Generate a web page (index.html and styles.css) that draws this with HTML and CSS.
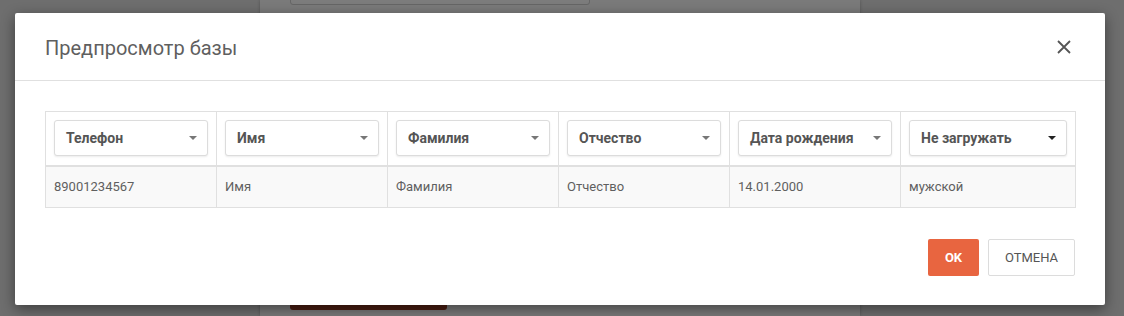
FILE: index.html
```html
<!DOCTYPE html>
<html lang="ru">
<head>
<meta charset="utf-8">
<link rel="stylesheet" href="styles.css">
</head>
<body>
<div class="page">
  <div class="side-left"></div>
  <div class="center">
    <div class="fake-input"></div>
    <div class="fake-btn"></div>
  </div>
  <div class="side-right"></div>
</div>
<div class="modal">
  <div class="modal-head">
    <h2 class="modal-title">Предпросмотр базы</h2>
    <button class="close" aria-label="close">
      <svg width="16" height="16" viewBox="0 0 16 16"><path d="M2 2L14 14M14 2L2 14" stroke="#555" stroke-width="1.8" fill="none"/></svg>
    </button>
  </div>
  <div class="modal-body">
    <table class="grid">
      <thead>
        <tr>
          <th><div class="sel">Телефон<span class="caret"></span></div></th>
          <th><div class="sel">Имя<span class="caret"></span></div></th>
          <th><div class="sel">Фамилия<span class="caret"></span></div></th>
          <th><div class="sel">Отчество<span class="caret"></span></div></th>
          <th><div class="sel">Дата рождения<span class="caret"></span></div></th>
          <th class="last"><div class="sel">Не загружать<span class="caret dark"></span></div></th>
        </tr>
      </thead>
      <tbody>
        <tr>
          <td>89001234567</td>
          <td>Имя</td>
          <td>Фамилия</td>
          <td>Отчество</td>
          <td>14.01.2000</td>
          <td>мужской</td>
        </tr>
      </tbody>
    </table>
  </div>
  <div class="modal-foot">
    <button class="btn btn-ok">OK</button>
    <button class="btn btn-cancel">ОТМЕНА</button>
  </div>
</div>
</body>
</html>
```
FILE: styles.css
```css
* { box-sizing: border-box; }
html, body { margin: 0; padding: 0; height: 100%; }
body {
  font-family: Roboto, "Liberation Sans", sans-serif;
  background: #6f6f6f;
  overflow: hidden;
}
.page {
  display: flex;
  height: 316px;
}
.side-left { width: 260px; background: #6e6e6e; }
.center {
  width: 600px;
  background: #7a7a7a;
  position: relative;
  box-shadow: 0 0 3px rgba(0,0,0,0.25);
}
.side-right { flex: 1; background: #6e6e6e; }
.fake-input {
  position: absolute;
  left: 30px; top: -10px;
  width: 300px; height: 15px;
  border: 1px solid #666;
  border-radius: 3px;
  background: #7c7c7c;
}
.fake-btn {
  position: absolute;
  left: 30px; top: 300px;
  width: 157px; height: 10px;
  background: #4a1d12;
  border-radius: 3px;
}
.modal {
  position: absolute;
  left: 15px; top: 13px;
  width: 1090px; height: 292px;
  background: #fff;
  border-radius: 2px;
  box-shadow: 0 4px 14px rgba(0,0,0,0.45);
}
.modal-head {
  height: 68px;
  border-bottom: 1px solid #e0e0e0;
  display: flex;
  align-items: center;
  justify-content: space-between;
  padding: 0 33px 0 30px;
}
.modal-title {
  margin: 0;
  font-size: 20px;
  font-weight: 400;
  color: #5f5f5f;
  padding-top: 2px;
}
.close {
  border: 0;
  background: none;
  padding: 0;
  width: 16px; height: 16px;
  display: flex;
  cursor: pointer;
}
.modal-body {
  padding: 30px 30px 0 30px;
}
.grid {
  width: 1030px;
  border-collapse: collapse;
  table-layout: fixed;
  font-size: 13px;
  color: #5f5f5f;
}
.grid th, .grid td {
  border: 1px solid #e0e0e0;
  text-align: left;
}
.grid th {
  width: 171px;
  padding: 8px 8px 9px 8px;
  border-bottom: 2px solid #e0e0e0;
}
.grid th.last { width: 175px; }
.grid td {
  background: #f9f9f9;
  height: 41px;
  padding: 0 8px;
}
.sel {
  height: 36px;
  border: 1px solid #dcdcdc;
  border-radius: 3px;
  box-shadow: 0 1px 2px rgba(0,0,0,0.08);
  display: flex;
  align-items: center;
  justify-content: space-between;
  padding: 0 10px 0 11px;
  font-size: 14px;
  font-weight: 700;
  color: #555;
  background: #fff;
}
.caret {
  width: 0; height: 0;
  border-left: 4px solid transparent;
  border-right: 4px solid transparent;
  border-top: 4px solid #777;
}
.caret.dark { border-top-color: #222; }
.modal-foot {
  display: flex;
  justify-content: flex-end;
  gap: 9px;
  padding: 31px 30px 0 0;
}
.btn {
  height: 37px;
  font-family: Roboto, "Liberation Sans", sans-serif;
  font-size: 13px;
  border-radius: 2px;
  cursor: pointer;
}
.btn-ok {
  width: 51px;
  background: #e86540;
  color: #fff;
  border: 0;
  font-weight: 700;
}
.btn-cancel {
  width: 87px;
  background: #fff;
  border: 1px solid #dcdcdc;
  color: #555;
}
```
